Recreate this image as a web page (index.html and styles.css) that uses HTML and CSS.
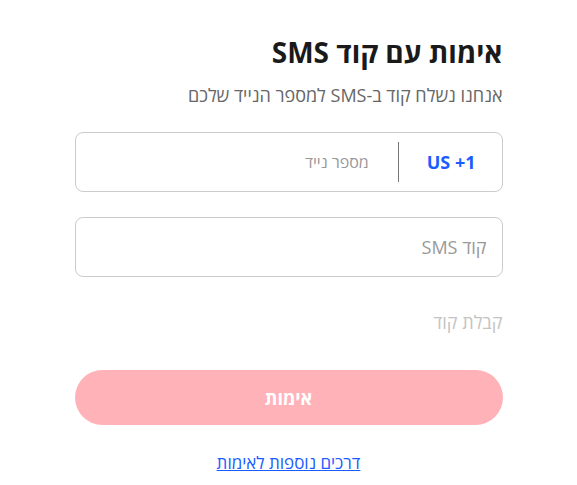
FILE: index.html
```html
<!DOCTYPE html>
<html lang="he" dir="rtl">
<head>
<meta charset="utf-8">
<link rel="stylesheet" href="styles.css">
</head>
<body>
<main class="card">
  <h1 class="title">אימות עם קוד SMS</h1>
  <p class="subtitle">אנחנו נשלח קוד ב-SMS למספר הנייד שלכם</p>
  <div class="field phone">
    <span class="country">US +1</span>
    <span class="divider"></span>
    <span class="placeholder">מספר נייד</span>
  </div>
  <div class="field code">
    <span class="placeholder">קוד SMS</span>
  </div>
  <div class="resend">קבלת קוד</div>
  <button class="verify">אימות</button>
  <div class="more"><a href="#">דרכים נוספות לאימות</a></div>
</main>
</body>
</html>
```
FILE: styles.css
```css
* { box-sizing: border-box; }
body {
  margin: 0;
  background: #fff;
  font-family: "Open Sans", "DejaVu Sans", sans-serif;
  color: #222;
}
.card {
  width: 428px;
  margin: 0 auto;
  padding-top: 33px;
  display: flex;
  flex-direction: column;
}
.title {
  margin: 0;
  font-size: 28px;
  font-weight: 700;
  line-height: 38px;
  color: #1a1a1a;
}
.subtitle {
  margin: 12px 0 0;
  font-size: 18px;
  line-height: 24px;
  color: #666;
}
.field {
  height: 60px;
  border: 1px solid #ccc;
  border-radius: 8px;
  display: flex;
  align-items: center;
  padding: 0 15px;
}
.phone { margin-top: 25px; padding-right: 26px; }
.code { margin-top: 25px; }
.country {
  color: #1a5cff;
  font-weight: 700;
  font-size: 18px;
}
.divider {
  width: 1px;
  height: 40px;
  background: #777;
  margin: 0 28px 0 29px;
}
.placeholder {
  color: #999;
  font-size: 16px;
}
.code .placeholder { font-size: 18px; }
.resend {
  margin-top: 33px;
  font-size: 18px;
  line-height: 24px;
  color: #c4c4c4;
}
.verify {
  margin-top: 36px;
  height: 55px;
  border: 0;
  border-radius: 28px;
  background: #ffb3b9;
  color: #fff;
  font-family: inherit;
  font-size: 18px;
  font-weight: 700;
}
.more {
  margin-top: 26px;
  text-align: center;
  font-size: 17px;
}
.more a { color: #1a5cff; }
```
